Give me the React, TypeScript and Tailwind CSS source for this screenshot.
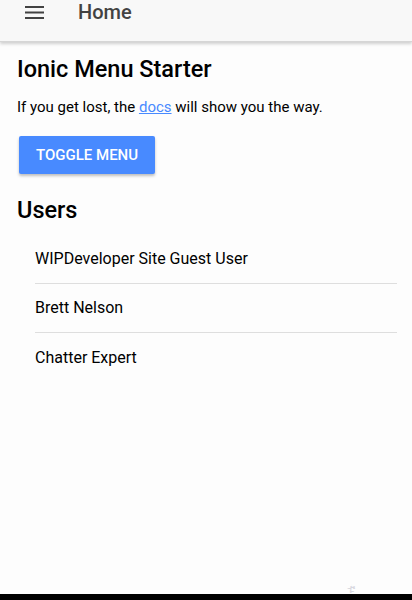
const USERS = ["WIPDeveloper Site Guest User", "Brett Nelson", "Chatter Expert"];

export default function App() {
  return (
    <div
      className="relative flex h-[600px] w-[412px] flex-col overflow-hidden bg-[#fdfdfd] text-black"
      style={{ fontFamily: "Roboto, 'Helvetica Neue', sans-serif" }}
    >
      {/* toolbar */}
      <header className="relative z-10 flex h-[42px] shrink-0 items-start bg-[#f8f8f8] shadow-[0_2px_3px_rgba(0,0,0,0.18)] border-b border-[#d6d6d6]">
        <button className="mt-[3px] ml-[23px] text-[#424242]">
          <svg width="24" height="20" viewBox="0 0 24 20">
            <rect x="2" y="3" width="19" height="2" fill="currentColor" />
            <rect x="2" y="8.5" width="19" height="2" fill="currentColor" />
            <rect x="2" y="14" width="19" height="2" fill="currentColor" />
          </svg>
        </button>
        <h2 className="ml-[31px] text-[20px] leading-[24px] font-medium text-[#424242]">Home</h2>
      </header>

      {/* content */}
      <main className="flex-1 px-[17px] pt-[13px]">
        <h1 className="text-[23.5px] leading-[28px] font-medium">Ionic Menu Starter</h1>
        <p className="mt-[14px] text-[15px] leading-[20px] text-[#000]">
          If you get lost, the{" "}
          <a href="#" className="text-[#488aff] underline">
            docs
          </a>{" "}
          will show you the way.
        </p>
        <button className="mt-[19px] ml-[2px] h-[38px] rounded-[2px] bg-[#488aff] px-[17px] text-[15px] font-medium uppercase text-white shadow-[0_2px_3px_rgba(0,0,0,0.25)]">
          Toggle Menu
        </button>

        <h2 className="mt-[22px] text-[23.5px] leading-[28px] font-medium">Users</h2>
        <ul className="mt-[11px] -mr-[2px] pl-[18px]">
          {USERS.map((u, i) => (
            <li
              key={u}
              className={
                "flex h-[49px] items-center text-[16px] text-black " +
                (i < USERS.length - 1 ? "border-b border-[#dedede]" : "")
              }
            >
              {u}
            </li>
          ))}
        </ul>
      </main>

      {/* faint floating glyph */}
      <div className="absolute left-[347px] top-[582px] text-[12px] leading-none text-[#d8d8e0]">ቲ</div>
      <div className="h-[6px] shrink-0 bg-black" />
    </div>
  );
}
